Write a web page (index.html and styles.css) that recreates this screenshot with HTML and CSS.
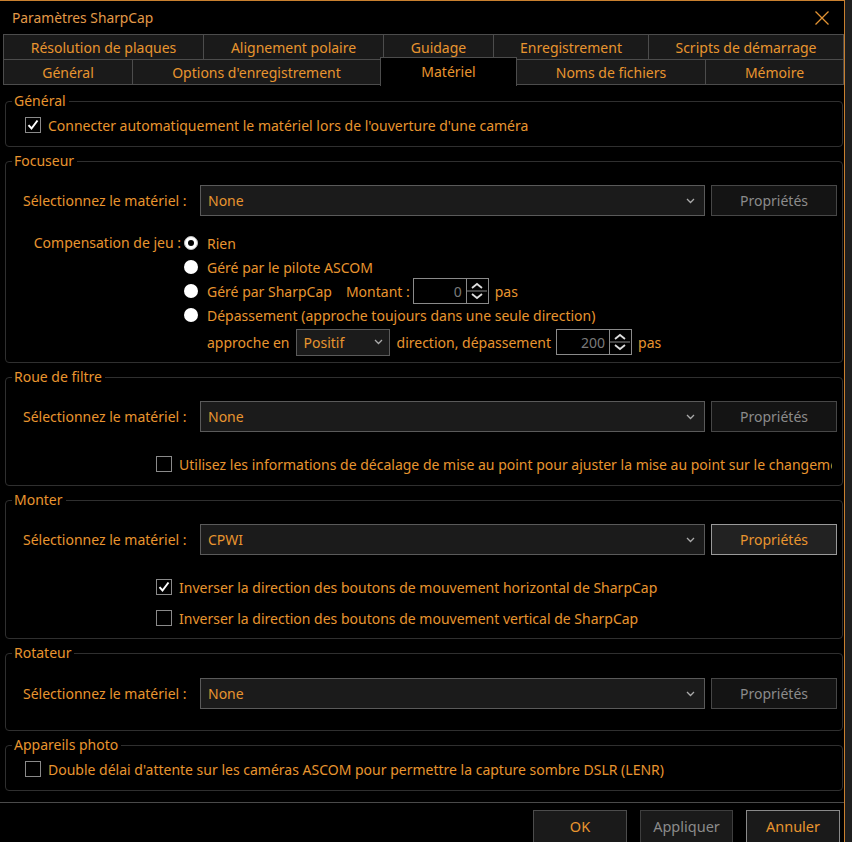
FILE: index.html
```html
<!DOCTYPE html>
<html lang="fr">
<head>
<meta charset="utf-8">
<title>Paramètres SharpCap</title>
<link rel="stylesheet" href="styles.css">
</head>
<body>
<div class="window">
  <div class="titlebar">
    <span class="title">Paramètres SharpCap</span>
    <svg class="close" width="16" height="16" viewBox="0 0 16 16"><path d="M1.5 1.5 L14.5 14.5 M14.5 1.5 L1.5 14.5" stroke="#e39333" stroke-width="1.3" fill="none"/></svg>
  </div>

  <div class="tabs">
    <div class="tabrow row1">
      <div class="tab">Résolution de plaques</div>
      <div class="tab">Alignement polaire</div>
      <div class="tab">Guidage</div>
      <div class="tab">Enregistrement</div>
      <div class="tab">Scripts de démarrage</div>
    </div>
    <div class="tabrow row2">
      <div class="tab">Général</div>
      <div class="tab">Options d'enregistrement</div>
      <div class="tab selected">Matériel</div>
      <div class="tab">Noms de fichiers</div>
      <div class="tab">Mémoire</div>
    </div>
  </div>

  <div class="content">
    <fieldset class="group g-general">
      <legend>Général</legend>
      <div class="check-row indent-s">
        <span class="cb checked"><svg width="14" height="14" viewBox="0 0 14 14"><path d="M2.5 7.2 L5.5 10.5 L11.5 2.5" stroke="#fff" stroke-width="2" fill="none"/></svg></span>
        <span>Connecter automatiquement le matériel lors de l'ouverture d'une caméra</span>
      </div>
    </fieldset>

    <fieldset class="group g-focus">
      <legend>Focuseur</legend>
      <div class="select-row">
        <span class="sel-label">Sélectionnez le matériel :</span>
        <div class="combo"><span>None</span><svg class="chev" width="9" height="6" viewBox="0 0 9 6"><path d="M1 1 L4.5 4.5 L8 1" stroke="#aaa" stroke-width="1.3" fill="none"/></svg></div>
        <div class="prop">Propriétés</div>
      </div>
      <div class="backlash">
        <span class="bl-label">Compensation de jeu :</span>
        <div class="radios">
          <div class="rrow"><span class="radio on"></span><span>Rien</span></div>
          <div class="rrow"><span class="radio"></span><span>Géré par le pilote ASCOM</span></div>
          <div class="rrow"><span class="radio"></span><span>Géré par SharpCap</span><span class="montant">Montant :</span>
            <div class="spin"><span class="val">0</span><div class="spinbtns"><svg width="20" height="22" viewBox="0 0 20 22"><path d="M5 8 L10 4 L15 8" stroke="#ddd" stroke-width="1.8" fill="none"/><path d="M0 11 H20" stroke="#888" stroke-width="1"/><path d="M5 14 L10 18 L15 14" stroke="#ddd" stroke-width="1.8" fill="none"/></svg></div></div>
            <span class="pas">pas</span></div>
          <div class="rrow"><span class="radio"></span><span>Dépassement (approche toujours dans une seule direction)</span></div>
          <div class="rrow last"><span class="approche">approche en</span>
            <div class="combo small"><span>Positif</span><svg class="chev" width="9" height="6" viewBox="0 0 9 6"><path d="M1 1 L4.5 4.5 L8 1" stroke="#aaa" stroke-width="1.3" fill="none"/></svg></div>
            <span class="dir">direction, dépassement</span>
            <div class="spin"><span class="val">200</span><div class="spinbtns"><svg width="20" height="22" viewBox="0 0 20 22"><path d="M5 8 L10 4 L15 8" stroke="#ddd" stroke-width="1.8" fill="none"/><path d="M0 11 H20" stroke="#888" stroke-width="1"/><path d="M5 14 L10 18 L15 14" stroke="#ddd" stroke-width="1.8" fill="none"/></svg></div></div>
            <span class="pas">pas</span></div>
        </div>
      </div>
    </fieldset>

    <fieldset class="group g-filter">
      <legend>Roue de filtre</legend>
      <div class="select-row">
        <span class="sel-label">Sélectionnez le matériel :</span>
        <div class="combo"><span>None</span><svg class="chev" width="9" height="6" viewBox="0 0 9 6"><path d="M1 1 L4.5 4.5 L8 1" stroke="#aaa" stroke-width="1.3" fill="none"/></svg></div>
        <div class="prop">Propriétés</div>
      </div>
      <div class="check-row indent-l clip">
        <span class="cb"></span>
        <span class="nowrap">Utilisez les informations de décalage de mise au point pour ajuster la mise au point sur le changement de filtre</span>
      </div>
    </fieldset>

    <fieldset class="group g-mount">
      <legend>Monter</legend>
      <div class="select-row">
        <span class="sel-label">Sélectionnez le matériel :</span>
        <div class="combo"><span>CPWI</span><svg class="chev" width="9" height="6" viewBox="0 0 9 6"><path d="M1 1 L4.5 4.5 L8 1" stroke="#aaa" stroke-width="1.3" fill="none"/></svg></div>
        <div class="prop active">Propriétés</div>
      </div>
      <div class="check-row indent-l first">
        <span class="cb checked"><svg width="14" height="14" viewBox="0 0 14 14"><path d="M2.5 7.2 L5.5 10.5 L11.5 2.5" stroke="#fff" stroke-width="2" fill="none"/></svg></span>
        <span>Inverser la direction des boutons de mouvement horizontal de SharpCap</span>
      </div>
      <div class="check-row indent-l second">
        <span class="cb"></span>
        <span>Inverser la direction des boutons de mouvement vertical de SharpCap</span>
      </div>
    </fieldset>

    <fieldset class="group g-rot">
      <legend>Rotateur</legend>
      <div class="select-row">
        <span class="sel-label">Sélectionnez le matériel :</span>
        <div class="combo"><span>None</span><svg class="chev" width="9" height="6" viewBox="0 0 9 6"><path d="M1 1 L4.5 4.5 L8 1" stroke="#aaa" stroke-width="1.3" fill="none"/></svg></div>
        <div class="prop">Propriétés</div>
      </div>
    </fieldset>

    <fieldset class="group g-cam">
      <legend>Appareils photo</legend>
      <div class="check-row indent-s">
        <span class="cb"></span>
        <span>Double délai d'attente sur les caméras ASCOM pour permettre la capture sombre DSLR (LENR)</span>
      </div>
    </fieldset>
  </div>

  <div class="separator"></div>
  <div class="buttons">
    <div class="btn ok">OK</div>
    <div class="btn apply">Appliquer</div>
    <div class="btn cancel">Annuler</div>
  </div>
</div>
</body>
</html>
```

FILE: styles.css
```css
* { box-sizing: border-box; }
html, body { margin: 0; padding: 0; }
body {
  background: #1f1f1f;
  font-family: "Noto Sans", "Open Sans", sans-serif;
  font-size: 14px;
  color: #e8952f;
  width: 852px;
  height: 842px;
  overflow: hidden;
}
.window {
  width: 845px;
  height: 842px;
  background: #000;
  border-top: 1px solid #c9802f;
  border-right: 1px solid #c9802f;
  overflow: hidden;
}
.titlebar {
  height: 33px;
  display: flex;
  align-items: center;
  justify-content: space-between;
  padding: 0 14px 0 12px;
}
.title { font-size: 13.8px; color: #e39a48; }
.close { display: block; }

.tabs { margin-left: 3px; width: 841px; }
.tabrow { display: flex; align-items: flex-start; }
.row2 { margin-top: -1px; }
.tab {
  height: 26px;
  margin-right: -1px;
  border: 1px solid #4c4c4c;
  background: #1a1a1a;
  display: flex;
  align-items: center;
  justify-content: center;
  font-size: 14px;
  color: #e8952f;
  white-space: nowrap;
}
.row1 .tab:nth-child(1) { width: 201px; }
.row1 .tab:nth-child(2) { width: 181px; }
.row1 .tab:nth-child(3) { width: 111px; }
.row1 .tab:nth-child(4) { width: 156px; }
.row1 .tab:nth-child(5) { width: 196px; }
.row2 .tab:nth-child(1) { width: 130px; }
.row2 .tab:nth-child(2) { width: 249px; }
.row2 .tab:nth-child(3) { width: 137px; }
.row2 .tab:nth-child(4) { width: 190px; }
.row2 .tab:nth-child(5) { width: 139px; }
.tab.selected {
  background: #000;
  border-bottom: none;
  height: 29px;
  margin-top: -2px;
  padding-bottom: 2px;
  z-index: 1;
}

.content { padding: 6px 0 0 5px; }
.group {
  width: 838px;
  margin: 0 0 5px 0;
  padding: 0;
  border: 1px solid #2f2f2f;
  border-radius: 4px;
  min-width: 0;
}
.group legend {
  margin-left: 6px;
  padding: 0 3px 0 2px;
  line-height: 18px;
  font-size: 14px;
  color: #e8952f;
}

.check-row { display: flex; align-items: center; height: 24px; white-space: nowrap; }
.indent-s { padding-left: 19px; }
.indent-l { padding-left: 150px; }
.cb {
  width: 16px; height: 16px;
  border: 1px solid #8a8a8a;
  background: #000;
  margin-right: 7px;
  display: flex; align-items: center; justify-content: center;
  flex: none;
}
.cb svg { display: block; }
.clip { overflow: hidden; width: 826px; }
.nowrap { white-space: nowrap; }

.g-general .check-row { margin: 3px 0 9px; }
.g-cam .check-row { margin: 3px 0 9px; }

.select-row { display: flex; align-items: center; padding-left: 17px; }
.sel-label { width: 177px; flex: none; }
.combo {
  width: 505px; height: 31px;
  border: 1px solid #5a5a5a;
  background: #1b1b1b;
  display: flex; align-items: center; justify-content: space-between;
  padding: 0 9px 0 7px;
  margin-right: 6px;
}
.chev { display: block; }
.prop {
  width: 126px; height: 31px;
  border: 1px solid #474747;
  background: #141414;
  color: #8b8b8b;
  display: flex; align-items: center; justify-content: center;
}
.prop.active { border-color: #9a9a9a; background: #222; color: #e8952f; }

.g-focus .select-row { margin-top: 15px; }
.backlash { display: flex; align-items: flex-start; margin-top: 15px; padding-bottom: 6px; }
.bl-label { width: 178px; text-align: right; padding-right: 3px; height: 24px; line-height: 24px; flex: none; white-space: nowrap; }
.radios { display: flex; flex-direction: column; }
.rrow { display: flex; align-items: center; height: 24px; white-space: nowrap; }
.rrow.last { height: 28px; margin-top: 1px; padding-left: 23px; }
.radio {
  width: 14px; height: 14px;
  border-radius: 50%;
  background: #fff;
  margin-right: 9px;
  display: flex; align-items: center; justify-content: center;
  flex: none;
}
.radio.on { background: #fff; border: 1px solid #bbb; }
.radio.on::after { content: ""; width: 6px; height: 6px; border-radius: 50%; background: #000; }
.montant { margin-left: 14px; margin-right: 3px; }
.spin {
  width: 76px; height: 26px;
  border: 1px solid #8a8a8a;
  background: #000;
  display: flex; align-items: stretch; justify-content: flex-end;
}
.spin .val { color: #7a7a7a; align-self: center; padding-right: 4px; }
.spinbtns { width: 22px; border-left: 1px solid #8a8a8a; display: flex; align-items: center; }
.spinbtns svg { display: block; }
.pas { margin-left: 6px; }
.approche { margin-right: 6px; }
.combo.small { width: 94px; height: 27px; margin-right: 7px; padding-right: 6px; }
.dir { margin-right: 5px; }

.g-filter .select-row { margin-top: 15px; }
.g-filter .check-row { margin: 20px 0 9px; }
.g-mount .select-row { margin-top: 15px; }
.g-mount .check-row.first { margin-top: 20px; }
.g-mount .check-row.second { margin: 7px 0 8px; }
.g-rot .select-row { margin: 16px 0 21px; }

.separator { height: 1px; background: #4a4a4a; margin-top: 11px; }
.buttons { display: flex; justify-content: flex-end; gap: 13px; padding: 7px 4px 0 0; }
.btn {
  width: 94px; height: 34px;
  border: 1px solid #4c4c4c;
  background: #1a1a1a;
  display: flex; align-items: center; justify-content: center;
  font-size: 14.5px;
  color: #e8952f;
  padding-bottom: 3px;
}
.btn.apply { width: 93px; color: #8b8b8b; border-color: #3e3e3e; }
.btn.cancel { border-color: #8a8a8a; }
```
